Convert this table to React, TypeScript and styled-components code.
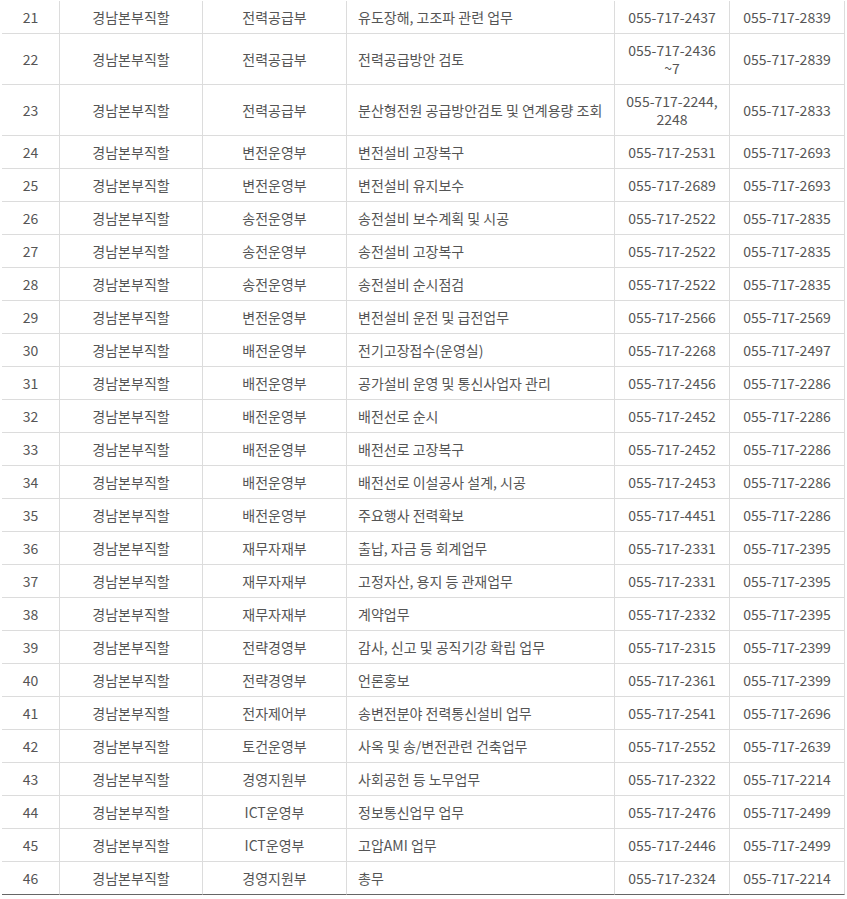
import React from "react";
import styled, { createGlobalStyle } from "styled-components";

const GlobalStyle = createGlobalStyle`
  html, body {
    margin: 0;
    padding: 0;
    background: #fff;
  }
  body {
    font-family: "Noto Sans CJK KR", "Noto Sans", sans-serif;
    color: #555;
  }
`;

type Row = {
  no: number;
  office: string;
  dept: string;
  task: string;
  tel: string[];
  fax: string;
};

const rows: Row[] = [
  { no: 21, office: "경남본부직할", dept: "전력공급부", task: "유도장해, 고조파 관련 업무", tel: ["055-717-2437"], fax: "055-717-2839" },
  { no: 22, office: "경남본부직할", dept: "전력공급부", task: "전력공급방안 검토", tel: ["055-717-2436", "~7"], fax: "055-717-2839" },
  { no: 23, office: "경남본부직할", dept: "전력공급부", task: "분산형전원 공급방안검토 및 연계용량 조회", tel: ["055-717-2244,", "2248"], fax: "055-717-2833" },
  { no: 24, office: "경남본부직할", dept: "변전운영부", task: "변전설비 고장복구", tel: ["055-717-2531"], fax: "055-717-2693" },
  { no: 25, office: "경남본부직할", dept: "변전운영부", task: "변전설비 유지보수", tel: ["055-717-2689"], fax: "055-717-2693" },
  { no: 26, office: "경남본부직할", dept: "송전운영부", task: "송전설비 보수계획 및 시공", tel: ["055-717-2522"], fax: "055-717-2835" },
  { no: 27, office: "경남본부직할", dept: "송전운영부", task: "송전설비 고장복구", tel: ["055-717-2522"], fax: "055-717-2835" },
  { no: 28, office: "경남본부직할", dept: "송전운영부", task: "송전설비 순시점검", tel: ["055-717-2522"], fax: "055-717-2835" },
  { no: 29, office: "경남본부직할", dept: "변전운영부", task: "변전설비 운전 및 급전업무", tel: ["055-717-2566"], fax: "055-717-2569" },
  { no: 30, office: "경남본부직할", dept: "배전운영부", task: "전기고장접수(운영실)", tel: ["055-717-2268"], fax: "055-717-2497" },
  { no: 31, office: "경남본부직할", dept: "배전운영부", task: "공가설비 운영 및 통신사업자 관리", tel: ["055-717-2456"], fax: "055-717-2286" },
  { no: 32, office: "경남본부직할", dept: "배전운영부", task: "배전선로 순시", tel: ["055-717-2452"], fax: "055-717-2286" },
  { no: 33, office: "경남본부직할", dept: "배전운영부", task: "배전선로 고장복구", tel: ["055-717-2452"], fax: "055-717-2286" },
  { no: 34, office: "경남본부직할", dept: "배전운영부", task: "배전선로 이설공사 설계, 시공", tel: ["055-717-2453"], fax: "055-717-2286" },
  { no: 35, office: "경남본부직할", dept: "배전운영부", task: "주요행사 전력확보", tel: ["055-717-4451"], fax: "055-717-2286" },
  { no: 36, office: "경남본부직할", dept: "재무자재부", task: "출납, 자금 등 회계업무", tel: ["055-717-2331"], fax: "055-717-2395" },
  { no: 37, office: "경남본부직할", dept: "재무자재부", task: "고정자산, 용지 등 관재업무", tel: ["055-717-2331"], fax: "055-717-2395" },
  { no: 38, office: "경남본부직할", dept: "재무자재부", task: "계약업무", tel: ["055-717-2332"], fax: "055-717-2395" },
  { no: 39, office: "경남본부직할", dept: "전략경영부", task: "감사, 신고 및 공직기강 확립 업무", tel: ["055-717-2315"], fax: "055-717-2399" },
  { no: 40, office: "경남본부직할", dept: "전략경영부", task: "언론홍보", tel: ["055-717-2361"], fax: "055-717-2399" },
  { no: 41, office: "경남본부직할", dept: "전자제어부", task: "송변전분야 전력통신설비 업무", tel: ["055-717-2541"], fax: "055-717-2696" },
  { no: 42, office: "경남본부직할", dept: "토건운영부", task: "사옥 및 송/변전관련 건축업무", tel: ["055-717-2552"], fax: "055-717-2639" },
  { no: 43, office: "경남본부직할", dept: "경영지원부", task: "사회공헌 등 노무업무", tel: ["055-717-2322"], fax: "055-717-2214" },
  { no: 44, office: "경남본부직할", dept: "ICT운영부", task: "정보통신업무 업무", tel: ["055-717-2476"], fax: "055-717-2499" },
  { no: 45, office: "경남본부직할", dept: "ICT운영부", task: "고압AMI 업무", tel: ["055-717-2446"], fax: "055-717-2499" },
  { no: 46, office: "경남본부직할", dept: "경영지원부", task: "총무", tel: ["055-717-2324"], fax: "055-717-2214" },
];

const columnWidths = [58, 143, 144, 268, 115, 115];

export default function App() {
  return (
    <>
      <GlobalStyle />
      <TableWrap>
        <ContactTable>
          <colgroup>
            {columnWidths.map((w, i) => (
              <col key={i} style={{ width: w }} />
            ))}
          </colgroup>
          <tbody>
            {rows.map((row) => (
              <tr key={row.no}>
                <Cell>{row.no}</Cell>
                <Cell>{row.office}</Cell>
                <Cell>{row.dept}</Cell>
                <Cell $left>{row.task}</Cell>
                <Cell>
                  {row.tel.map((t, i) => (
                    <React.Fragment key={t}>
                      {i > 0 && <br />}
                      {t}
                    </React.Fragment>
                  ))}
                </Cell>
                <Cell>{row.fax}</Cell>
              </tr>
            ))}
          </tbody>
        </ContactTable>
      </TableWrap>
    </>
  );
}

const TableWrap = styled.div`
  padding: 1px 0 0 2px;
`;

const ContactTable = styled.table`
  width: 843px;
  table-layout: fixed;
  border-collapse: separate;
  border-spacing: 0;

  tr:last-child td {
    border-bottom-color: #666;
  }
`;

const Cell = styled.td<{ $left?: boolean }>`
  padding: 7px ${(p) => (p.$left ? "0 7px 11px" : "4px")};
  border-right: 1px solid #dcdcdc;
  border-bottom: 1px solid #dcdcdc;
  font-size: 14px;
  line-height: 18px;
  text-align: ${(p) => (p.$left ? "left" : "center")};
  vertical-align: middle;
  white-space: nowrap;
  overflow: hidden;
`;
